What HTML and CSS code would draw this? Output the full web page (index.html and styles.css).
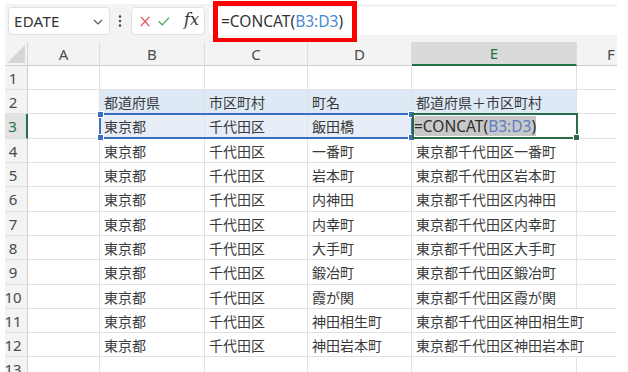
FILE: index.html
```html
<!DOCTYPE html>
<html lang="ja">
<head>
<meta charset="utf-8">
<link rel="stylesheet" href="styles.css">
</head>
<body>
<div class="app">
  <div class="toolbar">
    <div class="namebox">
      <span class="namebox-text">EDATE</span>
      <svg class="chev" width="10" height="6" viewBox="0 0 10 6"><path d="M1 1 L5 5 L9 1" fill="none" stroke="#555" stroke-width="1.2"/></svg>
    </div>
    <svg class="dots" width="4" height="12" viewBox="0 0 4 12"><circle cx="2" cy="1.5" r="1.2" fill="#444"/><circle cx="2" cy="6" r="1.2" fill="#444"/><circle cx="2" cy="10.5" r="1.2" fill="#444"/></svg>
    <div class="fxbox">
      <svg width="12" height="13" viewBox="0 0 12 13"><path d="M1 1 L11 12 M11 1 L1 12" stroke="#e0474c" stroke-width="1.4" fill="none"/></svg>
      <svg width="14" height="11" viewBox="0 0 14 11"><path d="M1 5.5 L5 9.5 L13 1" stroke="#3aa35a" stroke-width="1.4" fill="none"/></svg>
      <span class="fx">fx</span>
    </div>
    <div class="formula"><span>=CONCAT(</span><span class="ref">B3:D3</span><span>)</span></div>
    <div class="redbox"></div>
  </div>
  <div class="sheet">
    <div class="corner"><svg width="18" height="18" viewBox="0 0 18 18"><path d="M18 0 L18 18 L0 18 Z" fill="#d6d6d6"/></svg></div>
    <div class="ch">A</div><div class="ch">B</div><div class="ch">C</div><div class="ch">D</div><div class="ch ch-sel">E</div><div class="ch ch-last">F</div>

    <div class="rh">1</div><div class="c"></div><div class="c"></div><div class="c"></div><div class="c"></div><div class="c"></div><div class="c c-last"></div>
    <div class="rh">2</div><div class="c"></div><div class="c hd">都道府県</div><div class="c hd">市区町村</div><div class="c hd">町名</div><div class="c hd">都道府県＋市区町村</div><div class="c c-last"></div>
    <div class="rh rh-sel">3</div><div class="c"></div><div class="c rng">東京都</div><div class="c rng">千代田区</div><div class="c rng">飯田橋</div><div class="c edit"><span class="hl">=CONCAT(<span class="ref2">B3:D3</span>)</span></div><div class="c c-last"></div>
    <div class="rh">4</div><div class="c"></div><div class="c">東京都</div><div class="c">千代田区</div><div class="c">一番町</div><div class="c">東京都千代田区一番町</div><div class="c c-last"></div>
    <div class="rh">5</div><div class="c"></div><div class="c">東京都</div><div class="c">千代田区</div><div class="c">岩本町</div><div class="c">東京都千代田区岩本町</div><div class="c c-last"></div>
    <div class="rh">6</div><div class="c"></div><div class="c">東京都</div><div class="c">千代田区</div><div class="c">内神田</div><div class="c">東京都千代田区内神田</div><div class="c c-last"></div>
    <div class="rh">7</div><div class="c"></div><div class="c">東京都</div><div class="c">千代田区</div><div class="c">内幸町</div><div class="c">東京都千代田区内幸町</div><div class="c c-last"></div>
    <div class="rh">8</div><div class="c"></div><div class="c">東京都</div><div class="c">千代田区</div><div class="c">大手町</div><div class="c">東京都千代田区大手町</div><div class="c c-last"></div>
    <div class="rh">9</div><div class="c"></div><div class="c">東京都</div><div class="c">千代田区</div><div class="c">鍛冶町</div><div class="c">東京都千代田区鍛冶町</div><div class="c c-last"></div>
    <div class="rh">10</div><div class="c"></div><div class="c">東京都</div><div class="c">千代田区</div><div class="c">霞が関</div><div class="c">東京都千代田区霞が関</div><div class="c c-last"></div>
    <div class="rh">11</div><div class="c"></div><div class="c">東京都</div><div class="c">千代田区</div><div class="c">神田相生町</div><div class="c over">東京都千代田区神田相生町</div><div class="c c-last"></div>
    <div class="rh">12</div><div class="c"></div><div class="c">東京都</div><div class="c">千代田区</div><div class="c">神田岩本町</div><div class="c over">東京都千代田区神田岩本町</div><div class="c c-last"></div>
    <div class="rh">13</div><div class="c"></div><div class="c"></div><div class="c"></div><div class="c"></div><div class="c"></div><div class="c c-last"></div>

    <div class="range-box">
      <span class="hdl hdl-tl"></span><span class="hdl hdl-bl"></span><span class="hdl hdl-tr"></span><span class="hdl hdl-br"></span>
    </div>
    <div class="active-box"><span class="ahdl"></span></div>
  </div>
</div>
</body>
</html>
```

FILE: styles.css
```css
html, body {
  margin: 0;
  padding: 0;
  background: #ffffff;
}
body {
  width: 628px;
  height: 372px;
  overflow: hidden;
  font-family: "Noto Sans", "Noto Sans CJK JP", sans-serif;
}
.app {
  margin: 4px 0 0 5px;
  width: 612px;
}
.toolbar {
  position: relative;
  height: 38px;
  background: #f3f3f3;
  display: flex;
  align-items: flex-start;
  padding-top: 3px;
  box-sizing: border-box;
}
.namebox {
  margin-left: 3px;
  width: 102px;
  height: 28px;
  box-sizing: border-box;
  background: #fff;
  border: 1px solid #e1e1e1;
  border-radius: 4px;
  display: flex;
  align-items: center;
  justify-content: space-between;
  padding: 0 6px 0 5px;
}
.namebox-text {
  font-size: 15px;
  color: #333;
  letter-spacing: 0.3px;
}
.chev { margin-top: 1px; }
.dots {
  margin: 8px 0 0 8px;
}
.fxbox {
  margin-left: 9px;
  width: 74px;
  height: 28px;
  box-sizing: border-box;
  background: #fff;
  border: 1px solid #e1e1e1;
  border-radius: 4px;
  display: flex;
  align-items: center;
  padding: 0 5px 0 8px;
  gap: 8px;
}
.fx {
  font-family: "DejaVu Serif", "Liberation Serif", serif;
  font-style: italic;
  font-size: 16px;
  color: #333;
  margin-left: 6px;
  margin-top: -3px;
}
.formula {
  margin-left: 4px;
  flex: 1;
  height: 28px;
  box-sizing: border-box;
  background: #fff;
  border-radius: 4px 0 0 4px;
  display: flex;
  align-items: center;
  padding-left: 12px;
  font-size: 15.5px;
  color: #333;
}
.ref { color: #4a8ad4; }
.redbox {
  position: absolute;
  left: 208px;
  top: -3px;
  width: 144px;
  height: 42px;
  box-sizing: border-box;
  border: 5px solid #ff0000;
}

.sheet {
  position: relative;
  display: grid;
  grid-template-columns: 23px 72px 105px 103px 104px 165px 40px;
  grid-template-rows: 24px 24px 24px 25px 24px 24px 25px 24px 24px 25px 24px 24px 24px 24px;
  font-family: "Noto Sans CJK JP", "Noto Sans", sans-serif;
  height: 330px;
  overflow: hidden;
}
.corner {
  background: #f3f3f3;
  border-right: 1px solid #d4d4d4;
  border-bottom: 1px solid #d4d4d4;
  display: flex;
  align-items: flex-end;
  justify-content: flex-end;
  padding: 0 2px 2px 0;
}
.ch {
  background: #f3f3f3;
  border-right: 1px solid #dedede;
  border-bottom: 1px solid #cfcfcf;
  display: flex;
  align-items: center;
  justify-content: center;
  font-family: "Noto Sans", sans-serif;
  font-size: 15px;
  color: #4a4a4a;
}
.ch-sel {
  background: #dadada;
  color: #217346;
  border-bottom: 2px solid #217346;
}
.ch-last { border-right: none; justify-content: flex-start; padding-left: 30px; }
.rh {
  background: #f3f3f3;
  border-right: 1px solid #cfcfcf;
  border-bottom: 1px solid #e0e0e0;
  display: flex;
  align-items: center;
  justify-content: center;
  padding-right: 6px;
  font-family: "Noto Sans", sans-serif;
  font-size: 15px;
  color: #4a4a4a;
}
.rh-sel {
  background: #e2e2e2;
  color: #217346;
  border-right: 2px solid #217346;
}
.c {
  border-right: 1px solid #e1e1e1;
  border-bottom: 1px solid #e1e1e1;
  display: flex;
  align-items: center;
  padding-left: 4px;
  font-size: 14px;
  color: #3a3a3a;
  white-space: nowrap;
  overflow: visible;
  min-width: 0;
}
.c-last { border-right: none; }
.hd { background: #dde9f5; }
.rng { background: #e8eef8; }
.over { border-right-color: transparent; position: relative; z-index: 1; }
.edit { padding-left: 2px; }
.hl {
  background: #c8c8c8;
  font-family: "Noto Sans", sans-serif;
  font-size: 15.5px;
  color: #2e2e2e;
  line-height: 20px;
}
.ref2 { color: #5b7ec4; }

.range-box {
  position: absolute;
  left: 94px;
  top: 71px;
  width: 314px;
  height: 26px;
  box-sizing: border-box;
  border: 2px solid #3c6fc3;
  pointer-events: none;
}
.hdl {
  position: absolute;
  width: 5px;
  height: 5px;
  background: #3c6fc3;
  border: 1px solid #fff;
}
.hdl-tl { left: -4px; top: -4px; }
.hdl-bl { left: -4px; bottom: -4px; }
.hdl-tr { right: -4px; top: -4px; }
.hdl-br { right: -4px; bottom: -4px; }
.active-box {
  position: absolute;
  left: 407px;
  top: 71px;
  width: 166px;
  height: 26px;
  box-sizing: border-box;
  border: 2px solid #2b6b45;
}
.ahdl {
  position: absolute;
  right: -4px;
  bottom: -4px;
  width: 5px;
  height: 5px;
  background: #2b6b45;
  border: 1px solid #fff;
}
```
